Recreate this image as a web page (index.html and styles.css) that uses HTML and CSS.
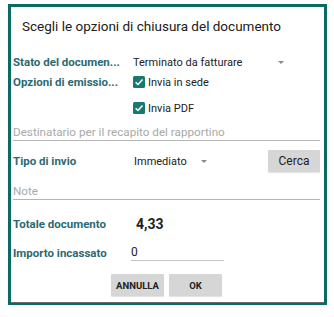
FILE: index.html
```html
<!DOCTYPE html>
<html lang="it">
<head>
<meta charset="utf-8">
<title>Chiusura documento</title>
<link rel="stylesheet" href="styles.css">
</head>
<body>
<div class="dialog">
  <h1 class="title">Scegli le opzioni di chiusura del documento</h1>

  <div class="row row-stato">
    <span class="label">Stato del documen...</span>
    <div class="select select-wide"><span>Terminato da fatturare</span><i class="caret"></i></div>
  </div>

  <div class="row row-opz">
    <span class="label">Opzioni di emissio...</span>
    <label class="check"><span class="box"><svg viewBox="0 0 12 12" width="12" height="12"><path d="M2.6 6.2 L5 8.5 L9.5 3.6" fill="none" stroke="#fff" stroke-width="1.5"/></svg></span>Invia in sede</label>
  </div>

  <div class="row row-pdf">
    <span class="label"></span>
    <label class="check"><span class="box"><svg viewBox="0 0 12 12" width="12" height="12"><path d="M2.6 6.2 L5 8.5 L9.5 3.6" fill="none" stroke="#fff" stroke-width="1.5"/></svg></span>Invia PDF</label>
  </div>

  <div class="field field-dest">Destinatario per il recapito del rapportino</div>

  <div class="row row-tipo">
    <span class="label">Tipo di invio</span>
    <div class="select select-narrow"><span>Immediato</span><i class="caret"></i></div>
    <button class="btn btn-cerca">Cerca</button>
  </div>

  <div class="field field-note">Note</div>

  <div class="row row-tot">
    <span class="label">Totale documento</span>
    <span class="total">4,33</span>
  </div>

  <div class="row row-imp">
    <span class="label">Importo incassato</span>
    <span class="input">0</span>
  </div>

  <div class="actions">
    <button class="btn btn-action">ANNULLA</button>
    <button class="btn btn-action">OK</button>
  </div>
</div>
</body>
</html>
```

FILE: styles.css
```css
html, body {
  margin: 0;
  padding: 0;
  background: #ffffff;
}

body {
  font-family: Roboto, "Liberation Sans", sans-serif;
  color: #222222;
}

.dialog {
  box-sizing: border-box;
  margin: 4px 0 0 8px;
  width: 319px;
  height: 301px;
  border: 3px solid #0b6a66;
  border-bottom-width: 2px;
  box-shadow: inset 0 -1px 0 #6b6b6b;
  padding: 0 4px 0 2px;
  background: #ffffff;
}

.title {
  margin: 0;
  padding: 11px 0 0 9px;
  height: 34px;
  font-size: 13.5px;
  line-height: 16px;
  font-weight: 400;
  color: #202020;
}

.row {
  display: flex;
  align-items: center;
}

.label {
  flex: 0 0 120px;
  font-size: 11.5px;
  font-weight: 700;
  color: #2b6a72;
  white-space: nowrap;
  overflow: hidden;
}

.row-stato { height: 20px; }
.row-opz { height: 20px; }
.row-pdf { height: 22px; margin-top: 5px; }

.select {
  display: flex;
  align-items: center;
  font-size: 11px;
  color: #222;
}

.select-wide { width: 151px; justify-content: space-between; }
.select-narrow { width: 73px; justify-content: space-between; margin-left: 1px; }

.caret {
  display: block;
  width: 0;
  height: 0;
  border-left: 3px solid transparent;
  border-right: 3px solid transparent;
  border-top: 3px solid #8a8a8a;
}

.check {
  display: flex;
  align-items: center;
  font-size: 11px;
  color: #222;
}

.box {
  display: block;
  width: 12px;
  height: 12px;
  border-radius: 1.5px;
  background: #187a6e;
  margin-right: 3px;
}

.box svg { display: block; }

.field {
  font-size: 11.7px;
  line-height: 16px;
  color: #a9a9a9;
  border-bottom: 1px solid #b5b5b5;
}

.field-dest { padding-top: 5px; }
.field-note { padding-top: 11px; }

.row-tipo { padding-top: 9px; height: 22px; }

.btn {
  border: 0;
  margin: 0;
  padding: 0;
  background: #d6d6d6;
  font-family: Roboto, "Liberation Sans", sans-serif;
  color: #222;
  box-shadow: 0 1px 1px rgba(0,0,0,0.12);
  border-radius: 1px;
}

.btn-cerca {
  margin-left: auto;
  width: 52px;
  height: 22px;
  font-size: 12px;
}

.row-tot { height: 20px; margin-top: 14px; }

.total {
  margin-left: 3px;
  font-size: 14px;
  font-weight: 700;
  color: #222;
}

.row-imp { margin-top: 10px; align-items: flex-end; }
.row-imp .label { padding-bottom: 1px; }

.input {
  margin-left: -2px;
  width: 93px;
  font-size: 12px;
  line-height: 16px;
  color: #222;
  border-bottom: 1px solid #c4c4c4;
}

.actions {
  display: flex;
  justify-content: center;
  gap: 5px;
  margin-top: 13px;
}

.btn-action {
  width: 53px;
  height: 22px;
  font-size: 9.5px;
  font-weight: 700;
}
```
